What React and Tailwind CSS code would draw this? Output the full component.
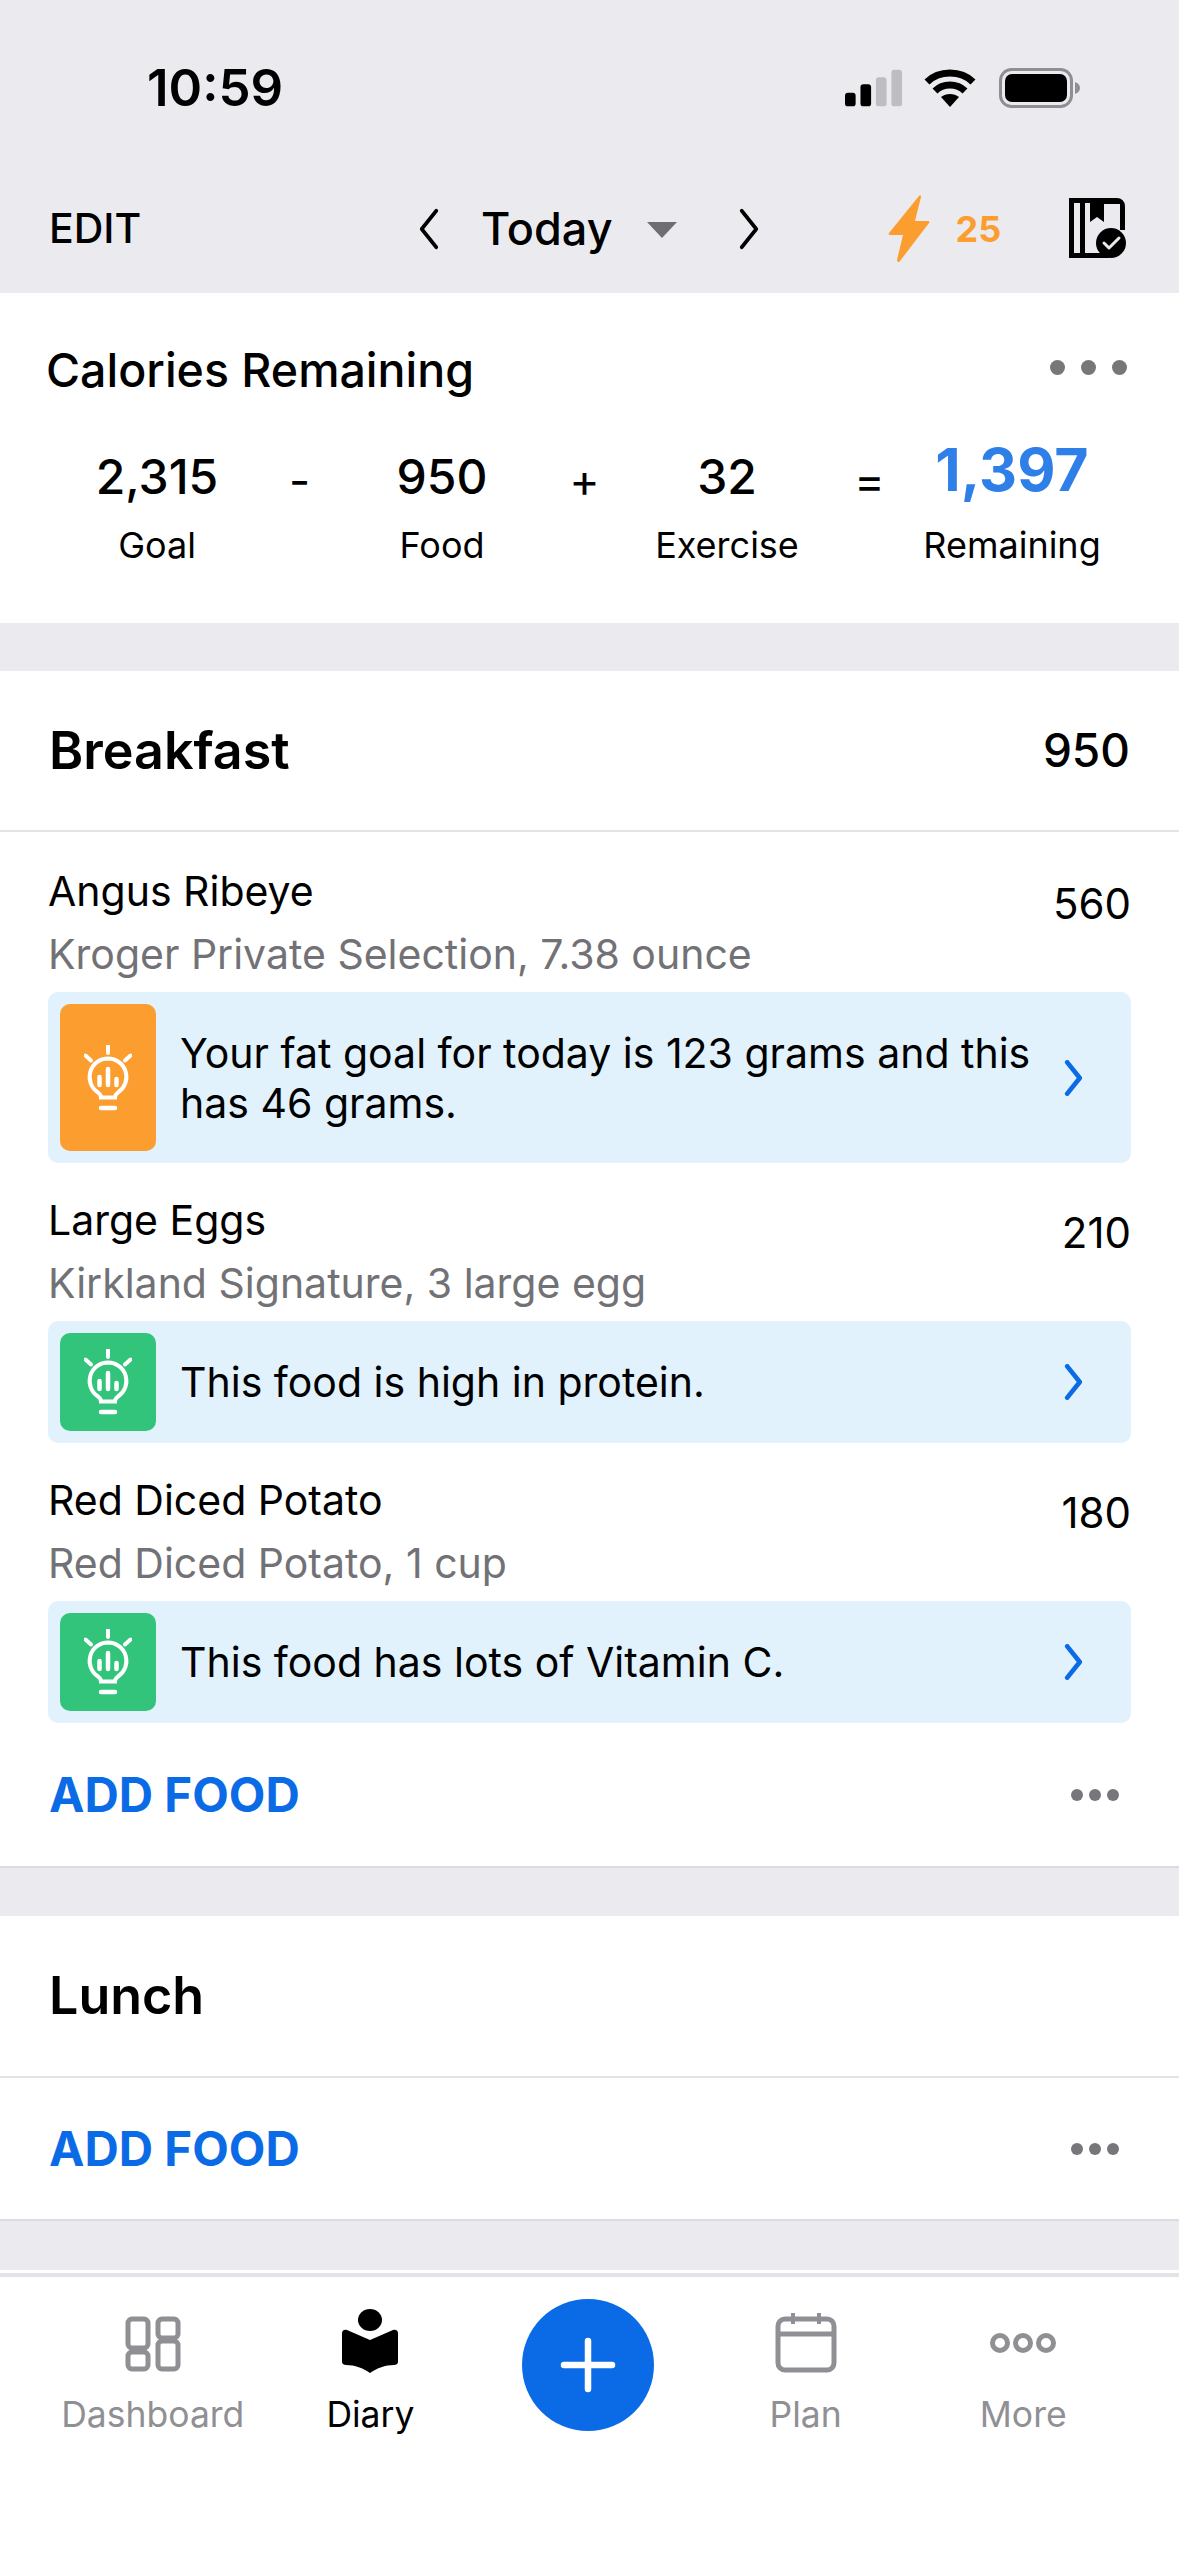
import React from "react";

function Chevron({ dir = "right", className = "", weight = 4 }) {
  const d = dir === "right" ? "M4 3l16 20L4 43" : "M20 3L4 23l16 20";
  return (
    <svg viewBox="0 0 24 46" className={className} fill="none" stroke="currentColor" strokeWidth={weight} strokeLinecap="round" strokeLinejoin="round">
      <path d={d} />
    </svg>
  );
}

function StatusIcons() {
  return (
    <div className="flex items-center">
      <svg width="58" height="38" viewBox="0 0 60 38">
        <rect x="0" y="24" width="11" height="14" rx="3" fill="#000" />
        <rect x="16" y="15" width="11" height="23" rx="3" fill="#000" />
        <rect x="32" y="8" width="11" height="30" rx="3" fill="#bdbdc2" />
        <rect x="48" y="0" width="11" height="38" rx="3" fill="#bdbdc2" />
      </svg>
      <svg width="52" height="38" viewBox="0 0 52 38" className="ml-[21px]" fill="none" stroke="#000" strokeWidth="7">
        <path d="M3 13C15 1 37 1 49 13" />
        <path d="M11 22c8-8 22-8 30 0" />
        <path d="M26 38l-9-10c5-4 13-4 18 0z" fill="#000" stroke="none" />
      </svg>
      <svg width="82" height="40" viewBox="0 0 82 40" className="ml-[23px]">
        <rect x="1.5" y="1.5" width="71" height="37" rx="11" fill="none" stroke="#8e8e93" strokeWidth="3" />
        <rect x="6" y="6" width="62" height="28" rx="7" fill="#000" />
        <path d="M76 14c3 1 5 3 5 6s-2 5-5 6z" fill="#8e8e93" />
      </svg>
    </div>
  );
}

function Bolt() {
  return (
    <svg width="42" height="68" viewBox="0 0 42 68">
      <path d="M31 1L1 38c-1 1 0 2 1 2h13L9 65c0 2 2 3 3 1l29-38c1-1 0-2-1-2H27L33 2c0-2-1-2-2-1z" fill="#fb9d2f" />
    </svg>
  );
}

function PlanBook() {
  return (
    <svg width="60" height="62" viewBox="0 0 60 62">
      <path d="M0 0h48a8 8 0 0 1 8 8v24H51V6H35v18l-7-5-7 5V5h-5v50h24v5H0zM5 5v50h6V5z" fill="#000" fillRule="evenodd" />
      <circle cx="42" cy="45" r="15" fill="#000" />
      <path d="M35 45l5 5 10-10" fill="none" stroke="#ebebef" strokeWidth="3" strokeLinecap="round" strokeLinejoin="round" />
    </svg>
  );
}

function Bulb() {
  return (
    <svg width="48" height="66" viewBox="0 0 48 66" fill="none" stroke="#fff" strokeWidth="4" strokeLinecap="round">
      <path d="M24 1v7M1.5 10.5l5.5 5M46.5 10.5l-5.5 5" />
      <path d="M24 13.5a18.5 18.5 0 0 0-10 34c2 1.5 3 2.5 3 5h14c0-2.5 1-3.5 3-5a18.5 18.5 0 0 0-10-34z" />
      <path d="M17 63h14" strokeWidth="4.5" />
      <path d="M24 24v16M15.5 32v8M32.5 34v6" strokeWidth="4.5" />
    </svg>
  );
}

function TipBox({ color, tall, children }) {
  return (
    <div className={`flex items-center rounded-[10px] bg-[#e1f2fd] p-3 ${tall ? "h-[171px]" : "h-[122px]"}`}>
      <div className={`flex h-full w-[96px] shrink-0 items-center justify-center rounded-[10px] ${color}`}>
        <Bulb />
      </div>
      <p className="ml-[24px] w-[880px] text-[41px] leading-[50px] text-black">{children}</p>
      <Chevron weight={6} className="ml-auto mr-[35px] h-[36px] w-[21px] text-[#0b6be6]" />
    </div>
  );
}

function FoodItem({ name, detail, cal, color, tall, tip }) {
  return (
    <div>
      <div className="flex justify-between">
        <div>
          <div className="text-[41px] leading-[63px] text-black">{name}</div>
          <div className="text-[41px] leading-[63px] text-[#727276]">{detail}</div>
        </div>
        <div className="pt-[12px] text-[42px] leading-[63px] text-black">{cal}</div>
      </div>
      <div className="mt-[6px]">
        <TipBox color={color} tall={tall}>{tip}</TipBox>
      </div>
    </div>
  );
}

function MoreDots({ className = "" }) {
  return (
    <div className={`flex gap-[6px] ${className}`}>
      <span className="h-[12px] w-[12px] rounded-full bg-[#77777b]" />
      <span className="h-[12px] w-[12px] rounded-full bg-[#77777b]" />
      <span className="h-[12px] w-[12px] rounded-full bg-[#77777b]" />
    </div>
  );
}

function AddFood({ height }) {
  return (
    <div className={`flex items-center justify-between pl-[49px] pr-[60px] ${height}`}>
      <span className="text-[47.5px] font-bold text-[#0b6be6]">ADD FOOD</span>
      <MoreDots />
    </div>
  );
}

function SumCol({ value, label, blue }) {
  return (
    <div className="flex w-[200px] flex-col items-center">
      <div className={blue ? "h-[92px] pt-[7px] text-[59px] leading-[64px] font-bold text-[#2f7fe8]" : "h-[92px] pt-[14px] text-[48px] leading-[64px] font-medium text-black"}>
        {value}
      </div>
      <div className="text-[36px] leading-[44px] text-black">{label}</div>
    </div>
  );
}

function Op({ children }) {
  return <div className="flex-1 self-start pt-[24px] text-center text-[46px] leading-[50px] text-black">{children}</div>;
}

function TabLabel({ active, children }) {
  return <span className={`text-[35.5px] leading-[44px] ${active ? "text-black" : "text-[#909094]"}`}>{children}</span>;
}

export default function App() {
  return (
    <div className="flex h-[2556px] w-[1179px] flex-col bg-[#ebebef] font-['Inter','Noto_Sans',sans-serif]">
      {/* status bar + nav */}
      <header className="h-[293px] shrink-0">
        <div className="flex h-[187px] items-start justify-between pl-[147px] pr-[98px] pt-[60px]">
          <span className="text-[51px] leading-[56px] font-semibold text-black">10:59</span>
          <div className="pt-[8px]"><StatusIcons /></div>
        </div>
        <div className="flex h-[84px] items-center pl-[49px] pr-[50px]">
          <span className="w-[368px] text-[41px] font-medium text-black">EDIT</span>
          <Chevron dir="left" className="h-[42px] w-[24px] text-black" />
          <span className="ml-[40px] text-[45px] font-medium text-black">Today</span>
          <span className="ml-[34px] mt-[2px] h-0 w-0 border-x-[15px] border-t-[16px] border-x-transparent border-t-[#6e6e72]" />
          <Chevron className="ml-[60px] h-[42px] w-[24px] text-black" />
          <div className="ml-[127px] flex items-center">
            <Bolt />
            <span className="ml-[26px] text-[36px] font-bold text-[#fb9d2f]">25</span>
          </div>
          <div className="ml-auto"><PlanBook /></div>
        </div>
      </header>

      {/* calories */}
      <section className="h-[330px] shrink-0 bg-white">
        <div className="flex items-center justify-between pl-[46px] pr-[52px] pt-[47px]">
          <h2 className="text-[46.5px] leading-[60px] font-medium text-black">Calories Remaining</h2>
          <div className="mb-[6px] flex gap-[16px]">
            <span className="h-[15px] w-[15px] rounded-full bg-[#77777b]" />
            <span className="h-[15px] w-[15px] rounded-full bg-[#77777b]" />
            <span className="h-[15px] w-[15px] rounded-full bg-[#77777b]" />
          </div>
        </div>
        <div className="mt-[31px] flex items-center pl-[57px] pr-[67px]">
          <SumCol value="2,315" label="Goal" />
          <Op>-</Op>
          <SumCol value="950" label="Food" />
          <Op>+</Op>
          <SumCol value="32" label="Exercise" />
          <Op>=</Op>
          <SumCol value="1,397" label="Remaining" blue />
        </div>
      </section>

      {/* breakfast */}
      <section className="mt-[48px] shrink-0 border-b-2 border-[#dcdce0] bg-white">
        <div className="flex h-[161px] items-center justify-between border-b-2 border-[#e4e4e8] pl-[49px] pr-[49px]">
          <h3 className="text-[52px] font-semibold text-black">Breakfast</h3>
          <span className="text-[46px] font-medium text-black">950</span>
        </div>
        <div className="flex flex-col gap-[26px] px-[48px] pt-[28px]">
          <FoodItem name="Angus Ribeye" detail="Kroger Private Selection, 7.38 ounce" cal="560" color="bg-[#fb9d2f]" tall tip="Your fat goal for today is 123 grams and this has 46 grams." />
          <FoodItem name="Large Eggs" detail="Kirkland Signature, 3 large egg" cal="210" color="bg-[#33c47c]" tip="This food is high in protein." />
          <FoodItem name="Red Diced Potato" detail="Red Diced Potato, 1 cup" cal="180" color="bg-[#33c47c]" tip="This food has lots of Vitamin C." />
        </div>
        <AddFood height="h-[143px]" />
      </section>

      {/* lunch */}
      <section className="mt-[48px] shrink-0 border-b-2 border-[#dcdce0] bg-white">
        <div className="flex h-[162px] items-center border-b-2 border-[#e4e4e8] pl-[49px]">
          <h3 className="text-[52px] font-semibold text-black">Lunch</h3>
        </div>
        <AddFood height="h-[141px]" />
      </section>

      <div className="flex-1" />

      {/* tab bar */}
      <nav className="grid h-[283px] shrink-0 grid-cols-5 border-t-[4px] border-[#e4e4e8] bg-white pl-[44px] pr-[47px] pt-[22px] shadow-[0_-3px_0_#fff]">
        <div className="flex flex-col items-center">
          <div className="h-[94px] pt-[17px]">
            <svg width="56" height="56" viewBox="0 0 56 56" fill="none" stroke="#909094" strokeWidth="5">
              <rect x="3" y="3" width="20" height="29" rx="4" />
              <rect x="33" y="3" width="20" height="19" rx="4" />
              <rect x="3" y="36" width="20" height="17" rx="4" />
              <rect x="33" y="25" width="20" height="28" rx="4" />
            </svg>
          </div>
          <TabLabel>Dashboard</TabLabel>
        </div>
        <div className="flex flex-col items-center">
          <div className="h-[94px] pt-[10px]">
            <svg width="56" height="64" viewBox="0 0 56 64" fill="#000">
              <ellipse cx="28" cy="11" rx="12" ry="11" />
              <path d="M0 24c0-3 3-4 5-3l23 10 23-10c2-1 5 0 5 3v29c0 2-2 3-4 3-9 0-17 3-24 8-7-5-15-8-24-8-2 0-4-1-4-3z" />
            </svg>
          </div>
          <TabLabel active>Diary</TabLabel>
        </div>
        <div className="flex flex-col items-center">
          <div className="flex h-[132px] w-[132px] items-center justify-center rounded-full bg-[#0b6be6]">
            <svg width="56" height="56" viewBox="0 0 56 56" stroke="#fff" strokeWidth="6.5" strokeLinecap="round">
              <path d="M28 4v48M4 28h48" />
            </svg>
          </div>
        </div>
        <div className="flex flex-col items-center">
          <div className="h-[94px] pt-[14px]">
            <svg width="62" height="60" viewBox="0 0 62 60" fill="none" stroke="#909094" strokeWidth="5">
              <rect x="3" y="6" width="56" height="51" rx="7" />
              <path d="M3 21h56" />
              <path d="M18 0v11M44 0v11" strokeWidth="4" />
            </svg>
          </div>
          <TabLabel>Plan</TabLabel>
        </div>
        <div className="flex flex-col items-center">
          <div className="h-[94px] pt-[16px]">
            <svg width="68" height="56" viewBox="0 0 68 56" fill="none" stroke="#909094" strokeWidth="5">
              <circle cx="11" cy="28" r="7.5" />
              <circle cx="34" cy="28" r="7.5" />
              <circle cx="57" cy="28" r="7.5" />
            </svg>
          </div>
          <TabLabel>More</TabLabel>
        </div>
      </nav>
    </div>
  );
}
